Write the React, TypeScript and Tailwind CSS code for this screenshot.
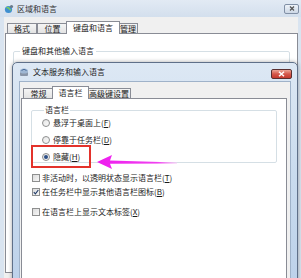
import React from "react";

const cjk = "font-['Noto_Sans_CJK_SC','Noto_Sans',sans-serif]";

function Hot({ k }: { k: string }) {
  return (
    <span>
      (<span className="underline">{k}</span>)
    </span>
  );
}

function Radio({ checked, label, hot }: { checked?: boolean; label: string; hot: string }) {
  return (
    <div className="flex h-[10px] items-center gap-[3px]">
      <span className="flex h-[8px] w-[8px] items-center justify-center rounded-full border border-[#8e8f8f] bg-gradient-to-br from-[#e6e6e6] to-[#fafafa]">
        {checked && <span className="h-[4px] w-[4px] rounded-full bg-[#2c4f86]" />}
      </span>
      <span className="text-[8px] leading-[10px] text-[#1a1a1a]">
        {label}
        <Hot k={hot} />
      </span>
    </div>
  );
}

function Check({ checked, label, hot }: { checked?: boolean; label: string; hot: string }) {
  return (
    <div className="flex h-[10px] items-center gap-[2px]">
      <span className="flex h-[8px] w-[8px] items-center justify-center border border-[#8e8f8f] bg-gradient-to-br from-[#dcdcdc] to-[#f7f7f7]">
        {checked && (
          <svg width="6" height="6" viewBox="0 0 6 6">
            <path d="M0.8 3.2 L2.4 4.8 L5.3 1" fill="none" stroke="#1f3a68" strokeWidth="1.1" />
          </svg>
        )}
      </span>
      <span className="text-[8px] leading-[10px] text-[#1a1a1a]">
        {label}
        <Hot k={hot} />
      </span>
    </div>
  );
}

function Tab({ label, active, w }: { label: string; active?: boolean; w: string }) {
  return (
    <div
      className={
        active
          ? `relative z-10 -mb-px -mx-[2px] flex h-[13px] items-center justify-center border border-b-0 border-[#898c95] bg-white text-[8px] ${w}`
          : `flex h-[10px] items-center justify-center border border-b-0 border-[#898c95] bg-gradient-to-b from-[#f5f5f5] to-[#e3e3e3] text-[8px] ${w}`
      }
    >
      {label}
    </div>
  );
}

export default function App() {
  return (
    <div className={`relative h-[278px] w-[301px] overflow-hidden bg-[#d9e4f0] ${cjk} text-[#1a1a1a]`}>
      {/* outer window title */}
      <div className="flex h-[17px] items-center bg-gradient-to-b from-[#e2eaf4] to-[#d3dfed] pl-[4px] pr-[2px]">
        <svg width="10" height="10" viewBox="0 0 10 10">
          <circle cx="4.5" cy="5.5" r="3.6" fill="#3f8fd0" />
          <path d="M2.5 4 Q4 3 5 4.5 T7 6" fill="none" stroke="#7ccf5a" strokeWidth="1.4" />
          <circle cx="7.5" cy="2.5" r="1.6" fill="#6a7a8a" />
        </svg>
        <span className="ml-[3px] text-[8px] text-[#333]">区域和语言</span>
        <div className="ml-auto flex h-[10px] w-[15px] items-center justify-center rounded-[2px] border border-[#8190a6] bg-gradient-to-b from-[#eef3f9] to-[#cdd8e6]">
          <svg width="6" height="5" viewBox="0 0 6 5">
            <path d="M1 0.5 L5 4.5 M5 0.5 L1 4.5" stroke="#555" strokeWidth="1.2" />
          </svg>
        </div>
      </div>

      {/* outer client */}
      <div className="ml-[4px] mr-[3px] h-[261px] bg-[#f0f0f0] pt-[1px]">
        <div className="flex h-[15px] items-end pl-[3px]">
          <Tab label="格式" w="w-[30px]" />
          <Tab label="位置" w="w-[31px]" />
          <Tab label="键盘和语言" active w="w-[54px]" />
          <Tab label="管理" w="w-[20px]" />
        </div>
        <div className="ml-[1px] h-[240px] border border-[#898c95] bg-white px-[7px] pt-[12px]">
          <fieldset className="h-[80px] rounded-[2px] border border-[#d5dfe5] pl-[3px]">
            <legend className="ml-[3px] px-[2px] text-[8px] leading-[10px]">键盘和其他输入语言</legend>
          </fieldset>
        </div>
      </div>

      {/* dialog window */}
      <div className="absolute left-[12px] top-[62px] h-[230px] w-[286px] rounded-t-[5px] border border-[#5f7089] bg-gradient-to-b from-[#dde8f4] via-[#c9dbee] to-[#bcd1ea] shadow-[0_0_4px_rgba(0,0,0,0.35)]">
        <div className="flex h-[18px] items-center pl-[6px] pr-[5px]">
          <svg width="11" height="10" viewBox="0 0 11 10">
            <rect x="1" y="5" width="8" height="4" rx="1" fill="#8a96a8" />
            <ellipse cx="5" cy="4" rx="4" ry="2.6" fill="#9fb7d3" />
            <path d="M2.5 3.5 Q5 1 7.5 3.5" fill="none" stroke="#4d6f9c" strokeWidth="1" />
          </svg>
          <span className="ml-[3px] text-[8px] text-[#1a1a1a]">文本服务和输入语言</span>
          <div className="ml-auto mt-[3px] flex h-[10px] w-[21px] items-center justify-center rounded-[2px] border border-[#5a2f2f] bg-gradient-to-b from-[#eba597] via-[#d4574a] to-[#c5392d]">
            <svg width="7" height="6" viewBox="0 0 7 6">
              <path d="M1 0.8 L6 5.2 M6 0.8 L1 5.2" stroke="#fff" strokeWidth="1.5" />
            </svg>
          </div>
        </div>
        <div className="mx-[6px] h-[210px] border border-[#9fb2c9] bg-[#f0f0f0] pl-[1px] pr-[3px] pt-[3px]">
          <div className="flex h-[13px] items-end pl-[2px]">
            <Tab label="常规" w="w-[31px]" />
            <Tab label="语言栏" active w="w-[37px]" />
            <Tab label="高级键设置" w="w-[44px]" />
          </div>
          <div className="h-[200px] border border-[#898c95] bg-white px-[9px] pt-[6px]">
            <fieldset className="h-[58px] rounded-[2px] border border-[#d5dfe5] pl-[10px]">
              <legend className="ml-[2px] px-[1px] text-[8px] leading-[10px]">语言栏</legend>
              <div className="flex flex-col gap-[7px] pt-[3px]">
                <Radio label="悬浮于桌面上" hot="F" />
                <Radio label="停靠于任务栏" hot="D" />
                <Radio checked label="隐藏" hot="H" />
              </div>
            </fieldset>
            <div className="mt-[10px] flex flex-col gap-[4px] pl-[1px]">
              <Check label="非活动时，以透明状态显示语言栏" hot="T" />
              <Check checked label="在任务栏中显示其他语言栏图标" hot="B" />
              <div className="mt-[6px]">
                <Check label="在语言栏上显示文本标签" hot="X" />
              </div>
            </div>
          </div>
        </div>
      </div>

      {/* annotation */}
      <div className="absolute left-[31px] top-[145px] h-[23px] w-[60px] border-2 border-[#e3322b]" />
      <svg className="absolute left-[95px] top-[150px]" width="86" height="22" viewBox="0 0 86 22">
        <defs>
          <linearGradient id="ag" x1="0" x2="1" y1="0" y2="0">
            <stop offset="0" stopColor="#ee1cee" />
            <stop offset="0.75" stopColor="#f040f0" />
            <stop offset="1" stopColor="#f8c8f8" />
          </linearGradient>
        </defs>
        <path d="M2 12 L17 5 L15 10.4 L82 12.6 L82 13.6 L15 13.8 L17 19 Z" fill="url(#ag)" />
      </svg>
    </div>
  );
}
